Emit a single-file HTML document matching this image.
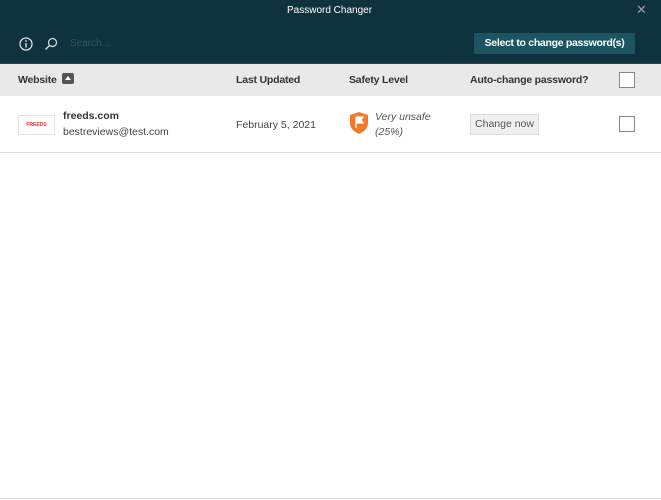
<!DOCTYPE html>
<html><head><style>
body{margin:0;width:661px;height:500px;background:#fff;font-family:"Liberation Sans",sans-serif;position:relative;overflow:hidden;color:#333}
.a{position:absolute;white-space:nowrap}
.hdr{position:absolute;left:0;top:0;width:661px;height:63px;background:#0f333e}
.gray{position:absolute;left:0;top:63px;width:661px;height:32px;background:#e9e9e9;border-top:1px solid #1f4a55}
.th{font-size:10.5px;font-weight:bold;color:#333;top:74px;letter-spacing:-0.2px}
.cb{position:absolute;width:14px;height:14px;border:1px solid #888;background:#fff}
</style></head><body>
<div class="hdr"></div>
<div class="a" style="left:287px;top:5px;font-size:10px;color:#fff">Password Changer</div>
<div class="a" style="left:636px;top:2px;font-size:13px;color:#99a">✕</div>
<svg class="a" style="left:18px;top:36px" width="16" height="16"><circle cx="8" cy="8" r="6" fill="none" stroke="#ddd" stroke-width="1.3"/><line x1="8" y1="7" x2="8" y2="11.5" stroke="#ddd" stroke-width="1.4"/><circle cx="8" cy="5" r="0.9" fill="#ddd"/></svg>
<svg class="a" style="left:43px;top:36px" width="16" height="16"><circle cx="9.5" cy="6.5" r="4" fill="none" stroke="#ddd" stroke-width="1.2"/><line x1="6.5" y1="9.5" x2="2.5" y2="13.5" stroke="#ddd" stroke-width="1.3"/></svg>
<div class="a" style="left:70px;top:38px;font-size:10px;color:#2e5966">Search...</div>
<div class="a" style="left:474px;top:33px;width:161px;height:21px;background:#1c5562;color:#fff;font-size:10.5px;font-weight:bold;text-align:center;line-height:21px;letter-spacing:-0.3px">Select to change password(s)</div>
<div class="gray"></div>
<div class="a th" style="left:18px">Website</div>
<div class="a" style="left:62px;top:73px;width:12px;height:11px;background:#555;border-radius:2px"><div style="margin:3px auto 0;width:0;height:0;border-left:3.5px solid transparent;border-right:3.5px solid transparent;border-bottom:4px solid #fff"></div></div>
<div class="a th" style="left:236px">Last Updated</div>
<div class="a th" style="left:349px">Safety Level</div>
<div class="a th" style="left:470px">Auto-change password?</div>
<div class="cb" style="left:619px;top:72px"></div>
<div class="a" style="left:18px;top:115px;width:35px;height:18px;border:1px solid #e4e4e4;background:#fff;color:#e33;font-size:5px;font-weight:bold;text-align:center;line-height:18px">FREEDS</div>
<div class="a" style="left:63px;top:110px;font-size:10.5px;font-weight:bold;color:#333">freeds.com</div>
<div class="a" style="left:63px;top:126px;font-size:10.5px;color:#444">bestreviews@test.com</div>
<div class="a" style="left:236px;top:119px;font-size:10.5px;color:#444">February 5, 2021</div>
<svg class="a" style="left:349px;top:111px" width="20" height="24"><path d="M10 1 L19 4 L19 12 C19 18 14 21 10 23 C6 21 1 18 1 12 L1 4 Z" fill="#f07a2a"/><path d="M7 6 L7 17 M7 6 L14 6 L12 9 L14 12 L7 12" fill="#fff" stroke="#fff" stroke-width="1.3"/></svg>
<div class="a" style="left:375px;top:110px;font-size:10.5px;font-style:italic;color:#555;line-height:15px">Very unsafe<br>(25%)</div>
<div class="a" style="left:470px;top:114px;width:67px;height:19px;background:#f0f0f0;border:1px solid #ddd;font-size:10.5px;color:#555;text-align:center;line-height:19px">Change now</div>
<div class="cb" style="left:619px;top:116px"></div>
<div class="a" style="left:0;top:152px;width:661px;height:1px;background:#ddd"></div>
<div class="a" style="left:0;top:498px;width:661px;height:1px;background:#ddd"></div>
</body></html>
